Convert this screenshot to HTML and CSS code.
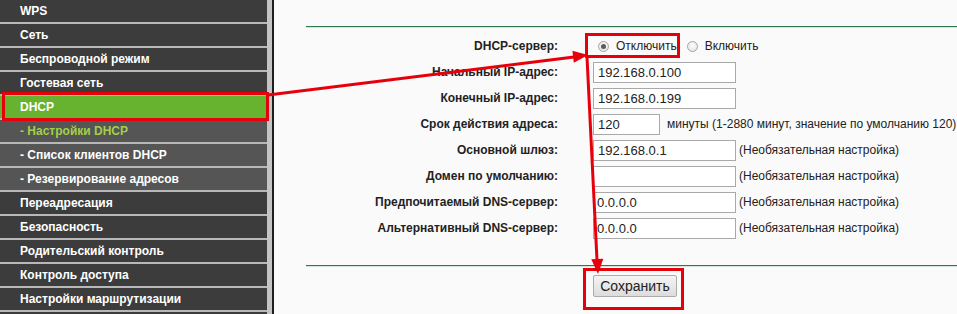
FILE: index.html
```html
<!DOCTYPE html>
<html lang="ru">
<head>
    <meta charset="UTF-8">
    <title>DHCP - Настройки DHCP</title>
    <link rel="stylesheet" href="styles.css">
</head>
<body>
    <div class="page">
        <nav class="menu">
            <a class="menu-item">WPS</a>
            <a class="menu-item">Сеть</a>
            <a class="menu-item">Беспроводной режим</a>
            <a class="menu-item">Гостевая сеть</a>
            <a class="menu-item active">DHCP</a>
            <a class="menu-item sub current">- Настройки DHCP</a>
            <a class="menu-item sub">- Список клиентов DHCP</a>
            <a class="menu-item sub">- Резервирование адресов</a>
            <a class="menu-item">Переадресация</a>
            <a class="menu-item">Безопасность</a>
            <a class="menu-item">Родительский контроль</a>
            <a class="menu-item">Контроль доступа</a>
            <a class="menu-item">Настройки маршрутизации</a>
            <a class="menu-item last"></a>
        </nav>

        <main class="content">
            <div class="rule"></div>

            <form class="dhcp-form">
                <div class="row">
                    <label>DHCP-сервер:</label>
                    <div class="field radios">
                        <span class="radio checked"></span><span class="radio-text">Отключить</span>
                        <span class="radio"></span><span class="radio-text">Включить</span>
                    </div>
                </div>
                <div class="row">
                    <label>Начальный IP-адрес:</label>
                    <div class="field"><input type="text" value="192.168.0.100"></div>
                </div>
                <div class="row">
                    <label>Конечный IP-адрес:</label>
                    <div class="field"><input type="text" value="192.168.0.199"></div>
                </div>
                <div class="row">
                    <label>Срок действия адреса:</label>
                    <div class="field"><input type="text" class="short" value="120"><span class="hint wide">минуты (1-2880 минут, значение по умолчанию 120)</span></div>
                </div>
                <div class="row">
                    <label>Основной шлюз:</label>
                    <div class="field"><input type="text" value="192.168.0.1"><span class="hint">(Необязательная настройка)</span></div>
                </div>
                <div class="row">
                    <label>Домен по умолчанию:</label>
                    <div class="field"><input type="text" value=""><span class="hint">(Необязательная настройка)</span></div>
                </div>
                <div class="row">
                    <label>Предпочитаемый DNS-сервер:</label>
                    <div class="field"><input type="text" class="tight" value="0.0.0.0"><span class="hint">(Необязательная настройка)</span></div>
                </div>
                <div class="row">
                    <label>Альтернативный DNS-сервер:</label>
                    <div class="field"><input type="text" class="tight" value="0.0.0.0"><span class="hint">(Необязательная настройка)</span></div>
                </div>
            </form>

            <div class="rule bottom"></div>

            <div class="actions">
                <button type="button" class="btn">Сохранить</button>
            </div>
        </main>
    </div>

    <!-- red annotation marks drawn over the screenshot -->
    <svg class="marks" width="957" height="314" viewBox="0 0 957 314">
        <g fill="none" stroke="#e6000a" stroke-width="3">
            <rect x="3.5" y="93.5" width="264" height="26"/>
            <rect x="586.5" y="34.5" width="92" height="22"/>
            <rect x="584.5" y="269.5" width="98" height="39"/>
            <line x1="268" y1="95" x2="574" y2="57"/>
            <line x1="587" y1="57" x2="597" y2="260"/>
        </g>
        <g fill="#e6000a">
            <polygon points="588,55 573.8,62.7 572.4,50.8"/>
            <polygon points="598,274 603.3,258.7 591.3,259.3"/>
        </g>
    </svg>
</body>
</html>
```

FILE: styles.css
```css
* {
    margin: 0;
    padding: 0;
    box-sizing: border-box;
}

body {
    font-family: "Liberation Sans", Arial, sans-serif;
    width: 957px;
    height: 314px;
    overflow: hidden;
    position: relative;
    background: #fafafa;
}

.page {
    display: flex;
    height: 314px;
    overflow: hidden;
}

/* left menu */
.menu {
    width: 272px;
    flex-shrink: 0;
    background: #c4c4c4;
    border-right: 5px solid #c4c4c4;
    display: flex;
    flex-direction: column;
    overflow: hidden;
}

.menu-item {
    display: block;
    height: 24px;
    line-height: 22px;
    padding-left: 20px;
    background: #3c3c3c;
    border-bottom: 2px solid #b8b8b8;
    color: #fff;
    font-size: 12px;
    font-weight: bold;
    flex-shrink: 0;
}

.menu-item.last {
    height: 2px;
    border-bottom: 0;
}

.menu-item.active {
    background: #67b32f;
}

.menu-item.sub {
    background: #555;
}

.menu-item.current {
    color: #a3cf48;
}

/* content */
.content {
    flex: 1;
    border-left: 2px solid #1e1e1e;
    padding-left: 32px;
}

.rule {
    margin-top: 26px;
    height: 2px;
    border-top: 1px solid #2d7a4e;
    background: #cfe6d8;
}

.rule.bottom {
    margin-top: 24px;
}

.dhcp-form {
    margin-top: 5px;
}

.row {
    display: grid;
    grid-template-columns: 252px 1fr;
    column-gap: 35px;
    align-items: center;
    height: 26px;
}

.row label {
    text-align: right;
    font-size: 12px;
    font-weight: bold;
    color: #222;
}

.field {
    display: flex;
    align-items: center;
}

.field input {
    width: 143px;
    height: 21px;
    border: 1px solid #a9a9a9;
    background: #fff;
    padding: 0 4px;
    font-family: inherit;
    font-size: 13px;
    color: #222;
    outline: none;
}

.field input.short {
    width: 67px;
}

.field input.tight {
    padding-left: 3px;
}

.hint {
    margin-left: 3px;
    font-size: 12px;
    color: #222;
}

.hint.wide {
    margin-left: 7px;
}

.radios {
    padding-left: 5px;
}

.radio {
    width: 11px;
    height: 11px;
    border-radius: 50%;
    border: 1px solid #a5a5a5;
    background: radial-gradient(circle at 50% 40%, #fdfdfd, #dedede);
    position: relative;
}

.radio.checked::after {
    content: "";
    position: absolute;
    left: 2px;
    top: 2px;
    width: 5px;
    height: 5px;
    border-radius: 50%;
    background: #5a5a5a;
}

.radio-text {
    font-size: 12px;
    color: #222;
    margin-left: 7px;
    margin-right: 10px;
}

.actions {
    padding-top: 8px;
    padding-left: 287px;
}

.btn {
    width: 84px;
    height: 22px;
    border: 1px solid #acacac;
    border-radius: 2px;
    background: linear-gradient(#f5f5f5, #dcdcdc);
    font-family: inherit;
    font-size: 14px;
    color: #222;
}

.marks {
    position: absolute;
    left: 0;
    top: 0;
    pointer-events: none;
}
```
